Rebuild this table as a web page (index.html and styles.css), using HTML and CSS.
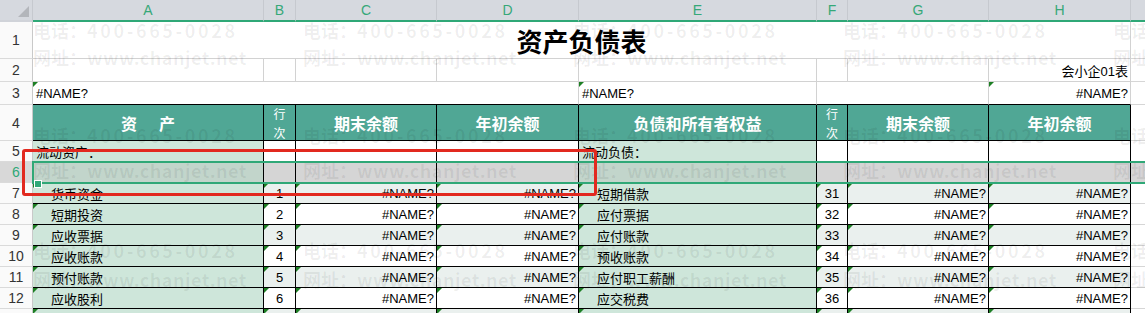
FILE: index.html
```html
<!DOCTYPE html>
<html lang="zh-CN">
<head>
<meta charset="utf-8">
<title>资产负债表</title>
<link rel="stylesheet" href="styles.css">
</head>
<body>
<div class="sheet">
  <div class="colhdr">
    <div class="corner"><span class="corner-tri"></span></div>
    <div class="cl">A</div><div class="cl">B</div><div class="cl">C</div><div class="cl">D</div>
    <div class="cl">E</div><div class="cl">F</div><div class="cl">G</div><div class="cl">H</div>
    <div class="cl cl-rest"></div>
  </div>

  <div class="row r1">
    <div class="rh">1</div>
    <div class="c g s8 title">资产负债表</div>
    <div class="ci"></div>
  </div>

  <div class="row r2">
    <div class="rh">2</div>
    <div class="c g"></div><div class="c g"></div><div class="c g"></div><div class="c g"></div>
    <div class="c g"></div><div class="c g"></div><div class="c g"></div>
    <div class="c g v">会小企01表</div>
    <div class="ci"></div>
  </div>

  <div class="row r3">
    <div class="rh">3</div>
    <div class="c g bb s4 t">#NAME?</div>
    <div class="c g bb t">#NAME?</div>
    <div class="c g bb s2"></div>
    <div class="c g bb v t">#NAME?</div>
    <div class="ci"></div>
  </div>

  <div class="row r4">
    <div class="rh">4</div>
    <div class="c k hd m"><span class="sp">资　产</span></div>
    <div class="c k hd m small">行<br>次</div>
    <div class="c k hd m">期末余额</div>
    <div class="c k hd m">年初余额</div>
    <div class="c k hd m">负债和所有者权益</div>
    <div class="c k hd m small">行<br>次</div>
    <div class="c k hd m">期末余额</div>
    <div class="c k hd m">年初余额</div>
    <div class="ci"></div>
  </div>

  <div class="row">
    <div class="rh">5</div>
    <div class="c k gr">流动资产：</div>
    <div class="c k"></div><div class="c k"></div><div class="c k"></div>
    <div class="c k gr">流动负债：</div>
    <div class="c k"></div><div class="c k"></div><div class="c k"></div>
    <div class="ci"></div>
  </div>

  <div class="row sel">
    <div class="rh rh-sel">6</div>
    <div class="c k gr"></div>
    <div class="c k"></div><div class="c k"></div><div class="c k"></div>
    <div class="c k gr"></div>
    <div class="c k"></div><div class="c k"></div><div class="c k"></div>
    <div class="ci"></div>
  </div>

  <div class="row alt">
    <div class="rh">7</div>
    <div class="c k gr ind t">货币资金</div>
    <div class="c k m t">1</div>
    <div class="c k v t">#NAME?</div>
    <div class="c k v t">#NAME?</div>
    <div class="c k gr ind t">短期借款</div>
    <div class="c k m t">31</div>
    <div class="c k v t">#NAME?</div>
    <div class="c k v t">#NAME?</div>
    <div class="ci"></div>
  </div>

  <div class="row">
    <div class="rh">8</div>
    <div class="c k gr ind t">短期投资</div>
    <div class="c k m t">2</div>
    <div class="c k v t">#NAME?</div>
    <div class="c k v t">#NAME?</div>
    <div class="c k gr ind t">应付票据</div>
    <div class="c k m t">32</div>
    <div class="c k v t">#NAME?</div>
    <div class="c k v t">#NAME?</div>
    <div class="ci"></div>
  </div>

  <div class="row alt">
    <div class="rh">9</div>
    <div class="c k gr ind t">应收票据</div>
    <div class="c k m t">3</div>
    <div class="c k v t">#NAME?</div>
    <div class="c k v t">#NAME?</div>
    <div class="c k gr ind t">应付账款</div>
    <div class="c k m t">33</div>
    <div class="c k v t">#NAME?</div>
    <div class="c k v t">#NAME?</div>
    <div class="ci"></div>
  </div>

  <div class="row">
    <div class="rh">10</div>
    <div class="c k gr ind t">应收账款</div>
    <div class="c k m t">4</div>
    <div class="c k v t">#NAME?</div>
    <div class="c k v t">#NAME?</div>
    <div class="c k gr ind t">预收账款</div>
    <div class="c k m t">34</div>
    <div class="c k v t">#NAME?</div>
    <div class="c k v t">#NAME?</div>
    <div class="ci"></div>
  </div>

  <div class="row alt">
    <div class="rh">11</div>
    <div class="c k gr ind t">预付账款</div>
    <div class="c k m t">5</div>
    <div class="c k v t">#NAME?</div>
    <div class="c k v t">#NAME?</div>
    <div class="c k gr ind t">应付职工薪酬</div>
    <div class="c k m t">35</div>
    <div class="c k v t">#NAME?</div>
    <div class="c k v t">#NAME?</div>
    <div class="ci"></div>
  </div>

  <div class="row">
    <div class="rh">12</div>
    <div class="c k gr ind t">应收股利</div>
    <div class="c k m t">6</div>
    <div class="c k v t">#NAME?</div>
    <div class="c k v t">#NAME?</div>
    <div class="c k gr ind t">应交税费</div>
    <div class="c k m t">36</div>
    <div class="c k v t">#NAME?</div>
    <div class="c k v t">#NAME?</div>
    <div class="ci"></div>
  </div>

  <div class="row alt r13">
    <div class="rh"></div>
    <div class="c k gr t"></div>
    <div class="c k t"></div>
    <div class="c k t"></div>
    <div class="c k t"></div>
    <div class="c k gr t"></div>
    <div class="c k t"></div>
    <div class="c k t"></div>
    <div class="c k t"></div>
    <div class="ci"></div>
  </div>
</div>

<div class="wm" aria-hidden="true">
  <div class="wm-row wm-r1">
    <div class="wm-tile"><div class="wm-line">电话：<span class="wm-num">400-665-0028</span></div><div class="wm-line wm-l2">网址：<span class="wm-url">www.chanjet.net</span></div></div>
    <div class="wm-tile"><div class="wm-line">电话：<span class="wm-num">400-665-0028</span></div><div class="wm-line wm-l2">网址：<span class="wm-url">www.chanjet.net</span></div></div>
    <div class="wm-tile"><div class="wm-line">电话：<span class="wm-num">400-665-0028</span></div><div class="wm-line wm-l2">网址：<span class="wm-url">www.chanjet.net</span></div></div>
    <div class="wm-tile"><div class="wm-line">电话：<span class="wm-num">400-665-0028</span></div><div class="wm-line wm-l2">网址：<span class="wm-url">www.chanjet.net</span></div></div>
    <div class="wm-tile"><div class="wm-line">电话：<span class="wm-num">400-665-0028</span></div><div class="wm-line wm-l2">网址：<span class="wm-url">www.chanjet.net</span></div></div>
  </div>
  <div class="wm-row wm-r2">
    <div class="wm-tile"><div class="wm-line">电话：<span class="wm-num">400-665-0028</span></div><div class="wm-line wm-l2">网址：<span class="wm-url">www.chanjet.net</span></div></div>
    <div class="wm-tile"><div class="wm-line">电话：<span class="wm-num">400-665-0028</span></div><div class="wm-line wm-l2">网址：<span class="wm-url">www.chanjet.net</span></div></div>
    <div class="wm-tile"><div class="wm-line">电话：<span class="wm-num">400-665-0028</span></div><div class="wm-line wm-l2">网址：<span class="wm-url">www.chanjet.net</span></div></div>
    <div class="wm-tile"><div class="wm-line">电话：<span class="wm-num">400-665-0028</span></div><div class="wm-line wm-l2">网址：<span class="wm-url">www.chanjet.net</span></div></div>
    <div class="wm-tile"><div class="wm-line">电话：<span class="wm-num">400-665-0028</span></div><div class="wm-line wm-l2">网址：<span class="wm-url">www.chanjet.net</span></div></div>
  </div>
  <div class="wm-row wm-r3">
    <div class="wm-tile"><div class="wm-line">电话：<span class="wm-num">400-665-0028</span></div><div class="wm-line wm-l2">网址：<span class="wm-url">www.chanjet.net</span></div></div>
    <div class="wm-tile"><div class="wm-line">电话：<span class="wm-num">400-665-0028</span></div><div class="wm-line wm-l2">网址：<span class="wm-url">www.chanjet.net</span></div></div>
    <div class="wm-tile"><div class="wm-line">电话：<span class="wm-num">400-665-0028</span></div><div class="wm-line wm-l2">网址：<span class="wm-url">www.chanjet.net</span></div></div>
    <div class="wm-tile"><div class="wm-line">电话：<span class="wm-num">400-665-0028</span></div><div class="wm-line wm-l2">网址：<span class="wm-url">www.chanjet.net</span></div></div>
    <div class="wm-tile"><div class="wm-line">电话：<span class="wm-num">400-665-0028</span></div><div class="wm-line wm-l2">网址：<span class="wm-url">www.chanjet.net</span></div></div>
  </div>
</div>

<div class="sel-box"><span class="handle"></span></div>
<div class="annot"></div>
</body>
</html>
```

FILE: styles.css
```css
html, body {
  margin: 0;
  padding: 0;
  width: 1145px;
  height: 313px;
  overflow: hidden;
  background: #ffffff;
}

body {
  position: relative;
  font-family: "Liberation Sans", "Noto Sans CJK SC", sans-serif;
  font-size: 13px;
  color: #000;
}

.sheet {
  width: 1145px;
}

.colhdr,
.row {
  display: grid;
  grid-template-columns: 33px 231px 32px 141px 142px 238px 31px 141px 142px 1fr;
}

/* ---------- column header ---------- */
.colhdr {
  height: 22px;
}

.corner {
  position: relative;
  background: #d6d9df;
  border-right: 1px solid #c6c9cf;
  border-bottom: 2px solid #d0d3d9;
  box-sizing: border-box;
}

.corner-tri {
  position: absolute;
  right: 3px;
  bottom: 3px;
  width: 0;
  height: 0;
  border-left: 11px solid transparent;
  border-bottom: 11px solid #b3b6bb;
}

.cl {
  background: #d6d9df;
  border-right: 1px solid #c6c9cf;
  border-bottom: 2px solid #2fa877;
  box-sizing: border-box;
  color: #36a878;
  font-size: 14px;
  line-height: 20px;
  text-align: center;
}

.cl-rest {
  border-right: none;
}

/* ---------- rows ---------- */
.row {
  height: 21px;
}

.r1 { height: 37px; }
.r2 { height: 23px; }
.r3 { height: 23px; }
.r4 { height: 36px; }
.r13 { height: 4px; overflow: hidden; }

.rh {
  background: #fafafa;
  border-right: 1px solid #c9c9c9;
  border-bottom: 1px solid #dadada;
  box-sizing: border-box;
  display: flex;
  align-items: center;
  justify-content: center;
  font-size: 14px;
  color: #333;
}

.r13 .rh,
.r13 .c,
.r13 .ci {
  border-bottom: none;
}

.rh-sel {
  background: #d8d8d8;
  color: #2fa877;
}

.c {
  position: relative;
  box-sizing: border-box;
  display: flex;
  align-items: center;
  padding: 0 3px;
  white-space: nowrap;
  overflow: hidden;
}

.ci {
  box-sizing: border-box;
  border-bottom: 1px solid #d6d6d6;
}

.g {
  border-right: 1px solid #d2d2d2;
  border-bottom: 1px solid #d2d2d2;
}

.bb {
  border-bottom-color: #000;
}

.k {
  border-right: 1px solid #000;
  border-bottom: 1px solid #000;
}

.s2 { grid-column: span 2; }
.s4 { grid-column: span 4; }
.s8 { grid-column: span 8; }

.title {
  justify-content: center;
  font-family: "Noto Sans CJK SC", sans-serif;
  font-weight: 700;
  font-size: 26px;
}

.v { justify-content: flex-end; padding-right: 2px; }
.m { justify-content: center; text-align: center; }

.hd {
  background: #50a795;
  color: #fff;
  font-family: "Noto Sans CJK SC", sans-serif;
  font-weight: 700;
  font-size: 16px;
}

.hd.small {
  font-weight: 400;
  font-size: 12px;
  line-height: 19px;
  padding: 0;
}

.sp {
  letter-spacing: 3px;
  margin-right: -3px;
}

.gr {
  background: #cee6da;
}

.ind {
  padding-left: 18px;
}

.alt .c:not(.gr) {
  background: #eaf0ee;
}

.sel .c,
.sel .ci {
  background: #d5d5d5;
}

.sel .c.gr {
  background: #c2d5cb;
}

/* error indicator triangles */
.t::before {
  content: "";
  position: absolute;
  left: 0;
  top: 0;
  width: 0;
  height: 0;
  border-top: 5px solid #1d7f24;
  border-right: 5px solid transparent;
}

/* ---------- watermark ---------- */
.wm {
  position: absolute;
  left: 0;
  top: 0;
  right: 0;
  bottom: 0;
  overflow: hidden;
  pointer-events: none;
  color: rgba(0, 0, 0, 0.065);
  font-family: "Noto Sans CJK SC", sans-serif;
  font-weight: 700;
  font-size: 18px;
  line-height: 18px;
}

.wm-row {
  display: flex;
  padding-left: 33px;
}

.wm-tile {
  flex: none;
  width: 270px;
  white-space: nowrap;
}

.wm-num { letter-spacing: 2.6px; }
.wm-url { letter-spacing: 0.5px; }

.wm-r1 { margin-top: 21px; }
.wm-r1 .wm-l2 { margin-top: 9px; }
.wm-r2 { margin-top: 60px; }
.wm-r2 .wm-l2 { margin-top: 17px; }
.wm-r3 { margin-top: 62px; }
.wm-r3 .wm-l2 { margin-top: 11px; }

/* ---------- selection & annotation overlays ---------- */
.sel-box {
  position: absolute;
  left: 32px;
  top: 161px;
  right: 0;
  height: 23px;
  box-sizing: border-box;
  border-top: 2px solid #2fa877;
  border-bottom: 2px solid #2fa877;
  border-left: 2px solid #2fa877;
}

.handle {
  position: absolute;
  left: 0;
  top: 17px;
  width: 6px;
  height: 6px;
  background: #2fa877;
  border: 1px solid #fff;
}

.annot {
  position: absolute;
  left: 22px;
  top: 149px;
  width: 575px;
  height: 47px;
  box-sizing: border-box;
  border: 3px solid #e2291f;
  border-radius: 3px;
}
```
